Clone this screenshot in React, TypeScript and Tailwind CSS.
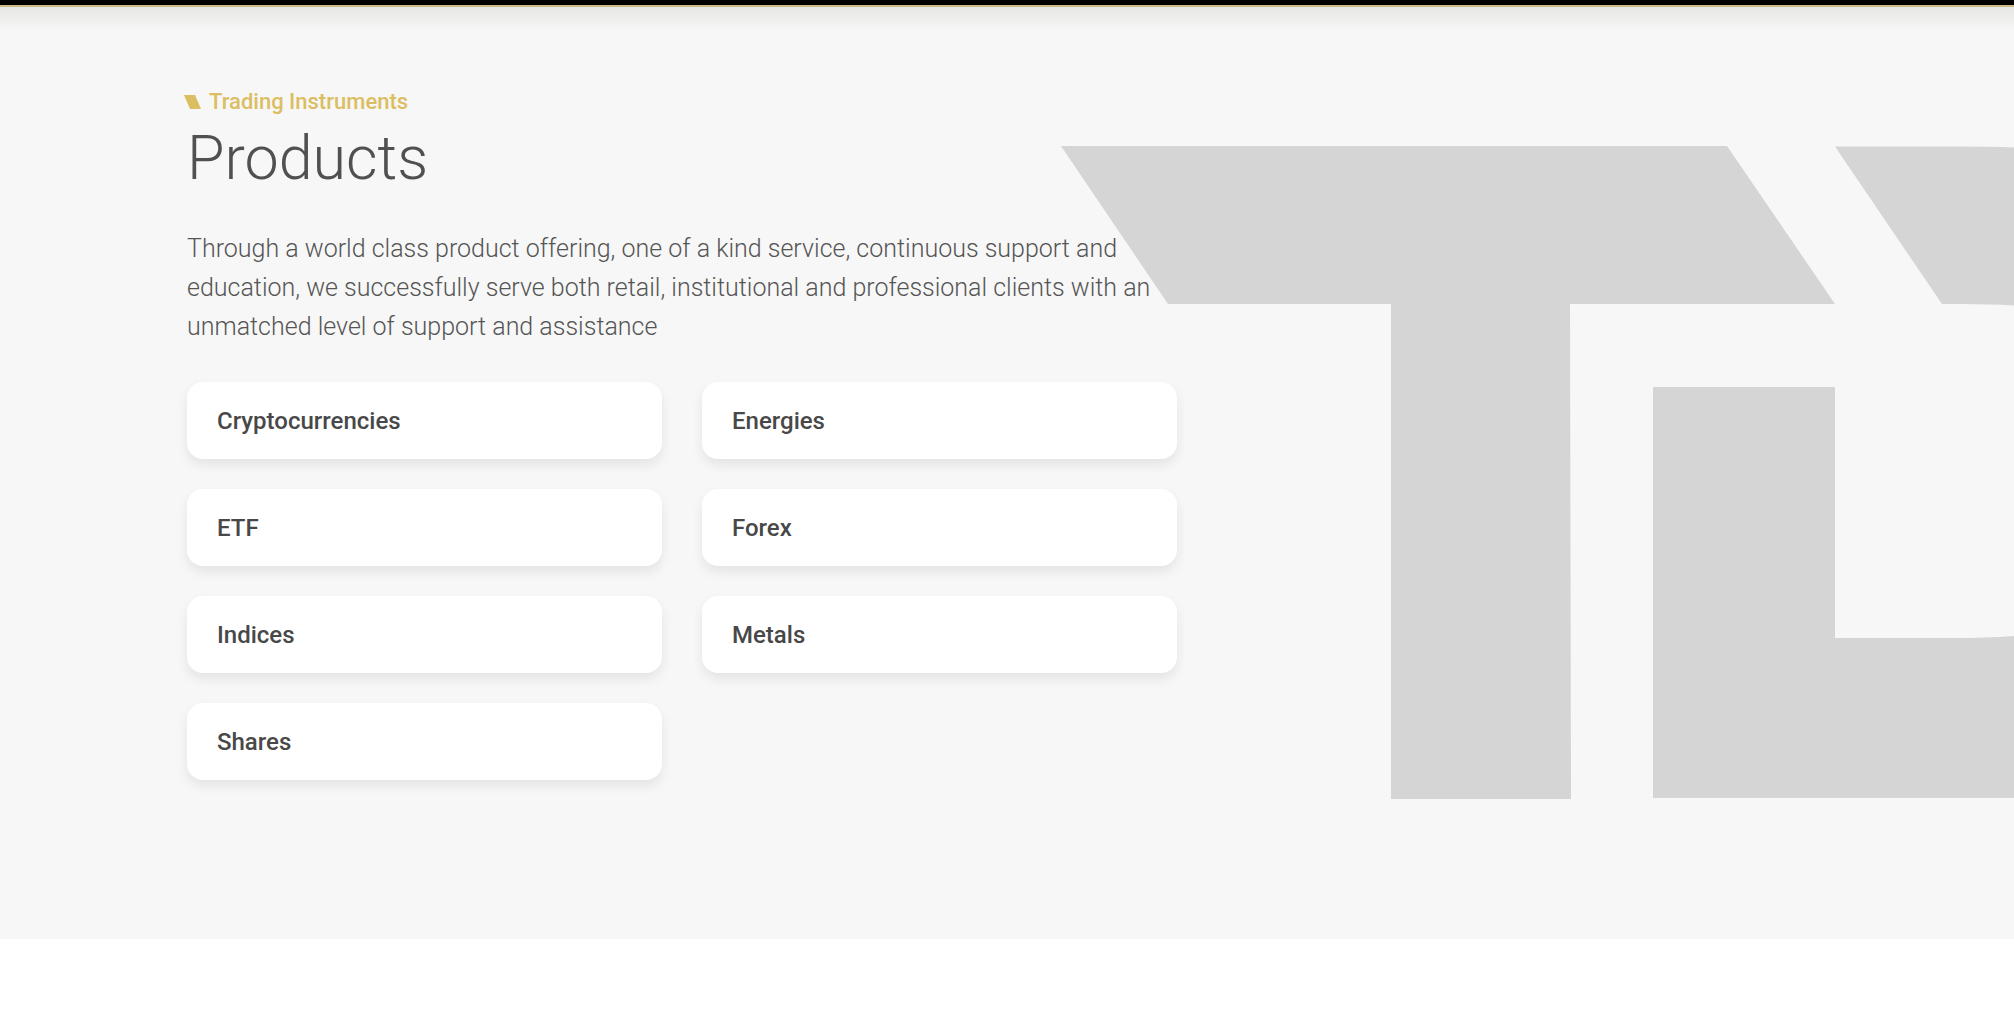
import React from "react";

const products = [
  "Cryptocurrencies",
  "Energies",
  "ETF",
  "Forex",
  "Indices",
  "Metals",
  "Shares",
];

const Watermark = () => (
  <svg
    className="absolute top-[139px] right-0 w-[953px] h-[653px] text-[#d5d5d5]"
    viewBox="0 0 953 653"
    fill="currentColor"
    aria-hidden="true"
  >
    <path d="M0 0H666L774 158H509L510 653H330V158H107Z" />
    <path d="M774 0.5H900Q930 0.5 953 1.5V159.5Q930 158 900 158H881Z" />
    <path d="M592 241H774V492H890Q925 492 953 490V652H592Z" />
  </svg>
);

const ProductCard = ({ name }: { name: string }) => (
  <a
    href="#"
    className="flex h-[77px] items-center rounded-2xl bg-white px-[30px] text-2xl font-medium text-[#484848] shadow-[0_6px_12px_rgba(0,0,0,0.08)]"
  >
    {name}
  </a>
);

export default function App() {
  return (
    <div className="min-h-screen bg-white font-[Roboto,sans-serif]">
      <header className="h-[7px] border-b-2 border-[#d0ba88] bg-black" />
      <section className="relative overflow-hidden bg-[#f7f7f7] pt-[80px] pb-[159px]">
        <div className="absolute inset-x-0 top-0 h-6 bg-linear-to-b from-[#e6e6e4] to-[#f7f7f7]" />
        <Watermark />
        <div className="relative ml-[187px] max-w-[990px]">
          <div className="flex items-center gap-2 text-[#dcbe62]">
            <svg
              className="-ml-[3px] h-[14px] w-[17px]"
              viewBox="0 0 17 14"
              fill="currentColor"
              aria-hidden="true"
            >
              <path d="M0 0H11L17 14H6Z" />
            </svg>
            <p className="text-[22px] leading-[30px] font-medium">
              Trading Instruments
            </p>
          </div>
          <h1 className="text-[61px] leading-[82px] font-light text-[#505050]">
            Products
          </h1>
          <p className="mt-[30px] mb-[36px] text-[25px] leading-[39px] font-light text-[#555]">
            Through a world class product offering, one of a kind service,
            continuous support and education, we successfully serve both retail,
            institutional and professional clients with an unmatched level of
            support and assistance
          </p>
          <div className="grid grid-cols-2 gap-x-10 gap-y-[30px]">
            {products.map((name) => (
              <ProductCard key={name} name={name} />
            ))}
          </div>
        </div>
      </section>
    </div>
  );
}
